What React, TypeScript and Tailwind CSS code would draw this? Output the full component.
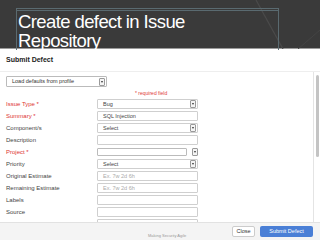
const font = { fontFamily: '"Liberation Sans", Arial, sans-serif' };

type Row = { label: string; required?: boolean; kind: "select" | "text" | "combo" | "hint"; value?: string };

const ROWS: Row[] = [
  { label: "Issue Type *", required: true, kind: "select", value: "Bug" },
  { label: "Summary *", required: true, kind: "text", value: "SQL Injection" },
  { label: "Component/s", kind: "select", value: "Select" },
  { label: "Description", kind: "text" },
  { label: "Project *", required: true, kind: "combo" },
  { label: "Priority", kind: "select", value: "Select" },
  { label: "Original Estimate", kind: "hint", value: "Ex. 7w 2d 6h" },
  { label: "Remaining Estimate", kind: "hint", value: "Ex. 7w 2d 6h" },
  { label: "Labels", kind: "text" },
  { label: "Source", kind: "text" },
  { label: "", kind: "text" },
];

function Arrow() {
  return (
    <span className="flex h-[8px] w-[6px] items-center justify-center rounded-[1px] border border-[#9a9a9a] bg-[#f4f4f4]">
      <span className="h-0 w-0 border-x-[1.5px] border-t-[2px] border-x-transparent border-t-[#333]" />
    </span>
  );
}

function Field({ row }: { row: Row }) {
  if (row.kind === "combo") {
    return (
      <div className="flex w-[101px] items-center gap-[5px]">
        <div className="h-[8px] flex-1 rounded-[1px] border border-[#bbb] bg-white" />
        <Arrow />
      </div>
    );
  }
  return (
    <div className="flex h-[10px] w-[101px] items-center justify-between rounded-[1px] border border-[#cfcfcf] bg-white pl-[5px] pr-[1px]">
      <span className={`text-[5.5px] ${row.kind === "hint" ? "text-[#aaa]" : "text-[#444]"}`}>{row.value ?? ""}</span>
      {row.kind === "select" && <Arrow />}
    </div>
  );
}

export default function App() {
  return (
    <div className="relative h-[240px] w-[320px] overflow-hidden bg-white" style={font}>
      <div className="relative flex h-[49px] flex-col border-b border-[#9a9a9a] bg-[#3a3a3a]">
        <svg className="absolute left-0 top-0" width="320" height="49" viewBox="0 0 320 49">
          <line x1="256" y1="0" x2="283" y2="49" stroke="#4a4a4a" strokeWidth="1.2" />
          <line x1="298" y1="49" x2="320" y2="30" stroke="#444" strokeWidth="1" />
        </svg>
        <div className="relative ml-[16px] mt-[8px] w-[263px] flex-1 border-x border-t-[3px] border-double border-[#5a6a70] px-[1px] pt-[1px]">
          <div className="text-[18.5px] leading-[20px] tracking-[-0.6px] text-white">Create defect in Issue</div>
          <div className="text-[18.5px] leading-[18px] tracking-[-0.6px] text-white">Repository</div>
        </div>
      </div>

      <div className="flex h-[23px] items-center border-b border-[#eee] px-[6px]">
        <span className="text-[7px] font-bold text-[#222]">Submit Defect</span>
      </div>

      <div className="flex">
        <div className="h-[150px] w-[314px] overflow-hidden border-r border-[#e4e4e4] px-[6px] pt-[4px]">
          <div className="flex h-[11px] w-[101px] items-center justify-between rounded-[1px] border border-[#bbb] bg-white pl-[5px] pr-[1px]">
            <span className="text-[5.5px] text-[#333]">Load defaults from profile</span>
            <Arrow />
          </div>
          <div className="mt-[2px] pl-[129px] text-[5px] leading-[8px] text-[#e03a3a]">* required field</div>
          <div className="mt-[1px] flex flex-col">
            {ROWS.map((r, i) => (
              <div key={i} className="flex h-[12px] items-center">
                <span className={`w-[91px] text-[6px] ${r.required ? "text-[#d33]" : "text-[#444]"}`}>{r.label}</span>
                <Field row={r} />
              </div>
            ))}
          </div>
        </div>
        <div className="flex w-[6px] justify-center pt-[3px]">
          <div className="h-[82px] w-[3px] rounded-full bg-[#c4c4c4]" />
        </div>
      </div>

      <div className="flex h-[18px] items-center border-t border-[#e2e2e2] bg-[#f4f4f4] pl-[148px] pr-[7px]">
        <span className="mt-[9px] text-[4px] text-[#999]">Making Security Agile</span>
        <div className="ml-auto flex items-center gap-[5px]">
          <button className="h-[11px] w-[23px] rounded-[2px] border border-[#ccc] bg-white text-[5.5px] text-[#333]">Close</button>
          <button className="h-[11px] w-[53px] rounded-[2px] bg-[#4a7fd6] text-[5.5px] text-white">Submit Defect</button>
        </div>
      </div>
    </div>
  );
}
